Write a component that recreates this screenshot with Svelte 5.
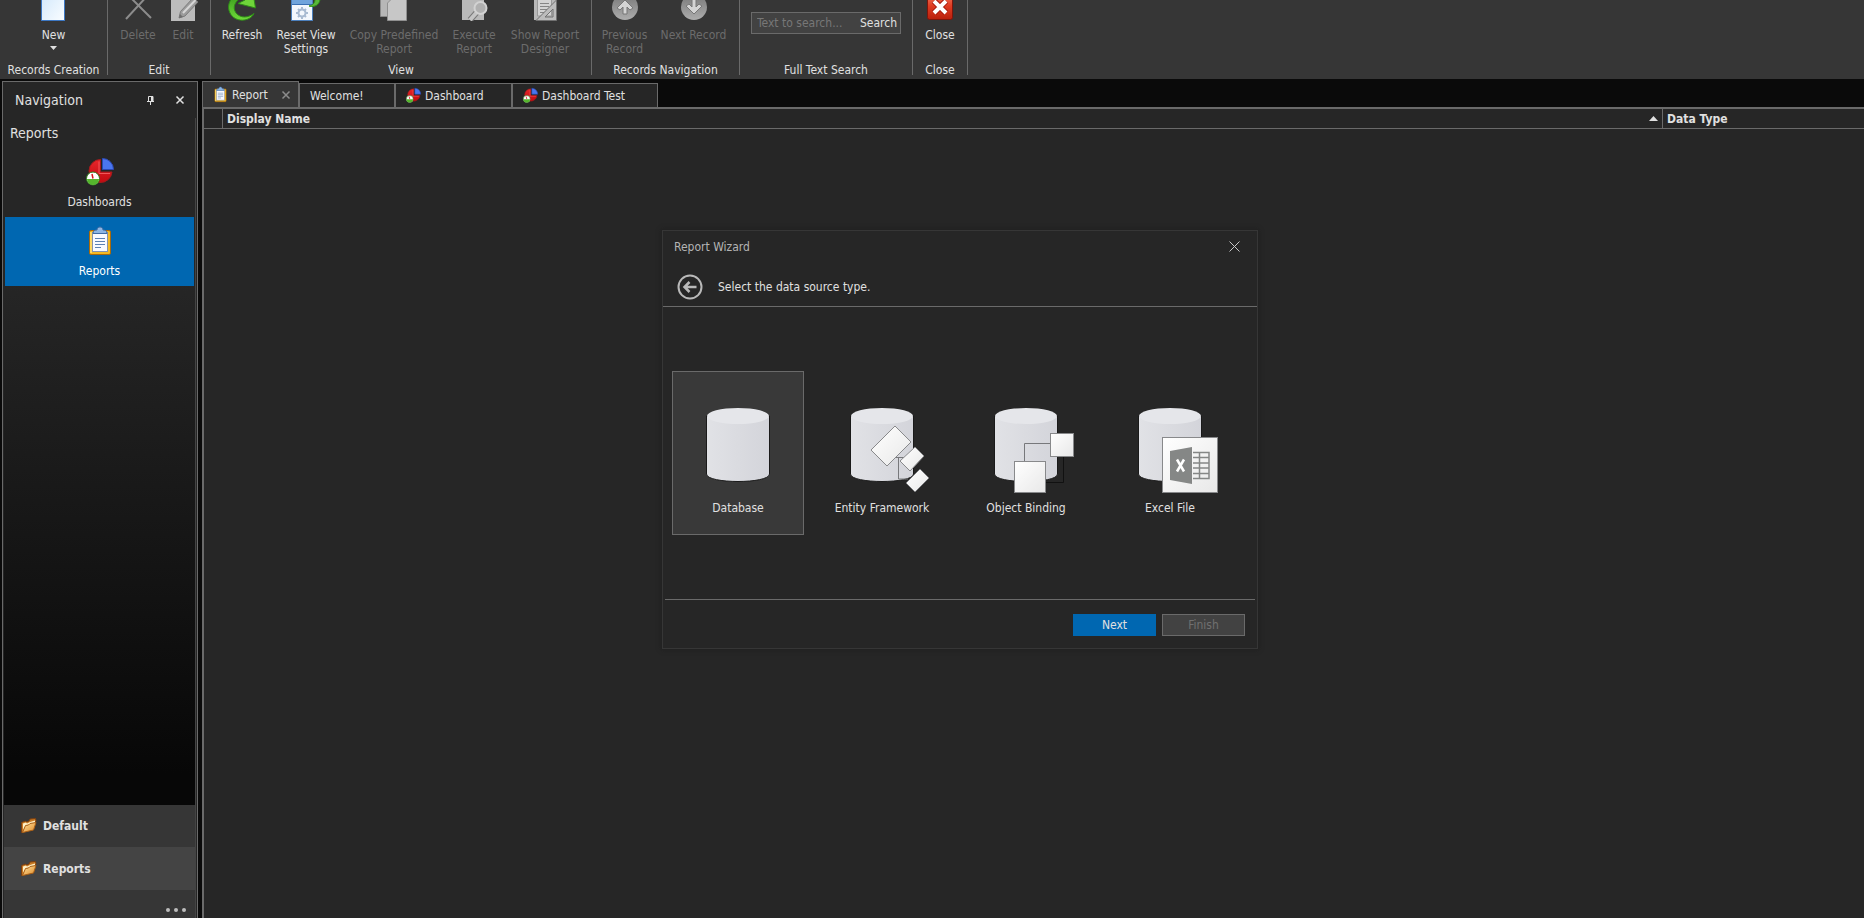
<script>
  let query = $state("");
  let activeTab = $state("Report");
  let activeItem = $state("Reports");
  let source = $state("Database");

  const ribbon = [
    { title: "Records Creation", width: 108, buttons: [{ label: "New", icon: "new", width: 60, menu: true }] },
    {
      title: "Edit",
      width: 103,
      buttons: [
        { label: "Delete", icon: "delete", width: 48, disabled: true },
        { label: "Edit", icon: "edit", width: 42, disabled: true },
      ],
    },
    {
      title: "View",
      width: 381,
      buttons: [
        { label: "Refresh", icon: "refresh", width: 52 },
        { label: "Reset View Settings", icon: "reset", width: 76 },
        { label: "Copy Predefined Report", icon: "copy", width: 100, disabled: true },
        { label: "Execute Report", icon: "execute", width: 60, disabled: true },
        { label: "Show Report Designer", icon: "designer", width: 82, disabled: true },
      ],
    },
    {
      title: "Records Navigation",
      width: 148,
      buttons: [
        { label: "Previous Record", icon: "up", width: 56, disabled: true },
        { label: "Next Record", icon: "down", width: 82, disabled: true },
      ],
    },
    { title: "Full Text Search", width: 173, search: true },
    { title: "Close", width: 55, buttons: [{ label: "Close", icon: "close", width: 50 }] },
  ];

  const tabs = [
    { label: "Report", icon: "clipboard", width: 97 },
    { label: "Welcome!", width: 96 },
    { label: "Dashboard", icon: "pie", width: 117 },
    { label: "Dashboard Test", icon: "pie", width: 146 },
  ];

  const items = [
    { label: "Dashboards", icon: "pie" },
    { label: "Reports", icon: "clipboard" },
  ];

  const sources = ["Database", "Entity Framework", "Object Binding", "Excel File"];
</script>

{#snippet pie(size)}
  <svg width={size} height={size} viewBox="0 0 28 28" aria-hidden="true">
    <path d="M14.500 1.500A11.500 11.500 0 1 0 26 14H14.500Z" fill="url(#slice)" stroke="#a51a1c" />
    <path d="M13 3.500V15.500H24" fill="none" stroke="#f2575a" />
    <path d="M16.500.5A11 11 0 0 1 27.500 11.500H16.500Z" fill="#4a76ee" stroke="#2c48b4" />
    <circle cx="7" cy="20.500" r="6.500" fill="#fff" stroke="#2f7d1c" />
    <path d="M1 21A6 6 0 0 0 13 21Z" fill="#55b52d" />
    <path d="M6 16l1 4.500" stroke="#d8131b" stroke-width="1.500" />
  </svg>
{/snippet}

{#snippet clipboard(size)}
  <svg width={size} height={size} viewBox="0 0 28 28" aria-hidden="true">
    <rect x="3.500" y="3.500" width="21" height="24" rx="1.500" fill="#f4b922" stroke="#a9690a" />
    <path d="M5 5v21" stroke="#ffe27a" stroke-width="1.500" />
    <rect x="6.500" y="5.500" width="15" height="19" fill="#f8faff" stroke="#8792ab" />
    <path d="M9 11.500h10M9 14.500h10M9 17.500h10M9 20.500h6" stroke="#5c81b3" />
    <path d="M7 6.500c0-3 2-3.500 4-3.500 0-4 6-4 6 0 2 0 4 .5 4 3.500Z" fill="#8db5e3" stroke="#3e6ca5" />
  </svg>
{/snippet}

{#snippet folder()}
  <svg width="16" height="16" viewBox="0 0 16 16" aria-hidden="true">
    <path d="M.5 14.500V4.500l4-1.500 1 1 2.500-1 1-2 5.500-.5.5 2-2.500 9Z" fill="#c97a24" stroke="#7b3f10" />
    <path d="M2 12V5.500l3-1 1 1 3-1.500 5-1.500v2L5 7.500Z" fill="#fff0c5" />
    <path d="M1.500 14.500L4.500 7.500l3-.5 1.500-1.500 6-1-2.500 7.500Z" fill="url(#manila)" stroke="#a96018" />
  </svg>
{/snippet}

<!-- Ribbon glyphs sit on a 32x32 grid whose top 11 rows are scrolled out of view -->
{#snippet ribbonIcon(name)}
  <svg class="ribbon-icon" width="32" height="21" viewBox="0 11 32 21" aria-hidden="true">
    {#if name === "new"}
      <rect x="3.500" y="1.500" width="23" height="30" fill="url(#paper)" stroke="#3d78c4" />
    {:else if name === "delete"}
      <path d="M4 30L27 5M5 5l24 24" stroke="#8c8c8c" stroke-width="2" fill="none" />
    {:else if name === "edit"}
      <rect x="4" y="4" width="24" height="28" fill="#bcbcbc" />
      <path d="M12 29l1.500-6.500L26 9l5 4-13 14Z" fill="#9c9c9c" stroke="#7c7c7c" />
      <path d="M16 24L28.500 11" stroke="#d6d6d6" stroke-width="2" />
      <path d="M12 29l1-4 3 3Z" fill="#6e6e6e" />
    {:else if name === "refresh"}
      <path d="M28 24.500C24 33 9 34 4 24 1 18 3 12 7 8l6 2c-6 5-6 11-2 15 4 4 11 4 17-.5Z" fill="url(#leaf)" stroke="#2f8c18" />
      <path d="M12 14.500L19 11l-3-5h9l3 4 1.500 9Z" fill="#6fd43a" stroke="#2f8c18" />
    {:else if name === "reset"}
      <rect x="1.500" y="5.500" width="21" height="26" fill="#f3f7fd" stroke="#4c80bd" />
      <rect x="2" y="11" width="20" height="4" fill="#70a4dc" />
      <path d="M2 15.500h20" stroke="#3a70b3" />
      <circle cx="12" cy="24" r="3.500" fill="none" stroke="#a9bbd2" stroke-width="2" />
      <path d="M12 18v3M12 27v3M6 24h3M15 24h3M8 20l2 2M14 26l2 2M16 20l-2 2M10 26l-2 2" stroke="#a9bbd2" stroke-width="2" />
      <path d="M19 17c6 2 11-2 11-7h-5c0 4-2 6-6 7Z" fill="#5ab73a" stroke="#2f8c18" />
    {:else if name === "copy"}
      <path d="M2.500 4h16v23.500h-16Z" fill="#b7b7b7" stroke="#898989" />
      <path d="M9.500 14l4-4h15v21.500h-19Z" fill="#c7c7c7" stroke="#909090" />
    {:else if name === "execute"}
      <path d="M4 5h22v26H4Z" fill="#b9b9b9" />
      <path d="M19 23l-7 8" stroke="#777" stroke-width="6" />
      <path d="M19 23l-7 8" stroke="#c5c5c5" stroke-width="4" />
      <circle cx="22.500" cy="19" r="6" fill="#b0b0b0" stroke="#d2d2d2" stroke-width="2" />
    {:else if name === "designer"}
      <path d="M5 4h22v27H5Z" fill="#b8b8b8" />
      <path d="M8.500 11v16h14V11" fill="#d3d3d3" stroke="#999" />
      <path d="M11 14.500h9M11 17.500h9M11 20.500h7M11 23.500h4" stroke="#858585" />
      <path d="M7 31.500L27.500 11v20.500ZM16 28h8v-8Z" fill="#bcbcbc" stroke="#717171" fill-rule="evenodd" />
    {:else if name === "up" || name === "down"}
      <circle cx="16" cy="18" r="13" fill="url(#steel)" />
      <path
        d={name === "up" ? "M16 11l8 8-3 2-3-3v7h-4v-7l-3 3-3-2Z" : "M16 25l8-8-3-2-3 3v-8h-4v8l-3-3-3 2Z"}
        fill="#d4d4d4"
        stroke="#777"
      />
    {:else if name === "close"}
      <rect x="3.500" y="3.500" width="25" height="27" rx="2" fill="url(#alert)" stroke="#7e150b" />
      <path d="M10 12l12 12M22 12L10 24" stroke="#a3170b" stroke-width="6" />
      <path d="M10 12l12 12M22 12L10 24" stroke="#fff" stroke-width="4" />
    {/if}
  </svg>
{/snippet}

{#snippet sourceIcon(name)}
  <svg width="104" height="80" viewBox="0 0 104 80" aria-hidden="true">
    <path d="M20.500 10v58c0 10 63 10 63 0V10Z" fill="url(#drum)" stroke="#1a1a1a" />
    <ellipse cx="52" cy="10" rx="31" ry="8" fill="#e5e6ea" />
    {#if name === "Entity Framework"}
      <path d="M66 51.500h10M68.500 51v22H78" fill="none" stroke="#77787b" />
      <path d="M65 20l16 16-24 24-16-16Z" fill="url(#sheet)" stroke="#88898b" />
      <path d="M85 41l9 9-14 15-10-10Z" fill="url(#sheet)" stroke="#88898b" />
      <path d="M90 63l9 9-14 14-9-9Z" fill="url(#sheet)" stroke="#77787b" />
    {:else if name === "Object Binding"}
      <path d="M50.500 56V37.500H77" fill="none" stroke="#77787b" />
      <path d="M72 76.500h17.500V50" fill="none" stroke="#111" />
      <rect x="76.500" y="27.500" width="23" height="23" fill="url(#sheet)" stroke="#88898b" />
      <rect x="40.500" y="55.500" width="31" height="31" fill="url(#sheet)" stroke="#88898b" />
    {:else if name === "Excel File"}
      <rect x="44.500" y="31.500" width="55" height="55" fill="url(#sheet)" stroke="#88898b" />
      <path d="M52 45l22-4v37l-22-4Z" fill="#858786" />
      <path d="M75 46.500h16v26H75M75 51.500h16M75 57h16M75 62h16M75 67.500h16M81.500 46v27" fill="none" stroke="#858786" stroke-width="1.500" />
      <path d="M59 53.500l7 12M66 53.500l-7 12" stroke="#fff" stroke-width="2.500" />
    {/if}
  </svg>
{/snippet}

<svg class="defs" width="0" height="0" aria-hidden="true">
  <defs>
    <linearGradient id="paper" x2="1" y2="1">
      <stop offset="0" stop-color="#cfe6fb" />
      <stop offset="1" stop-color="#fafdff" />
    </linearGradient>
    <linearGradient id="leaf" x2="0" y2="1">
      <stop offset="0" stop-color="#3fa01f" />
      <stop offset="1" stop-color="#6fd93a" />
    </linearGradient>
    <linearGradient id="slice" x2="0" y2="1">
      <stop offset="0" stop-color="#e8262b" />
      <stop offset="1" stop-color="#c20a10" />
    </linearGradient>
    <linearGradient id="manila" x2="1" y2="1">
      <stop offset="0" stop-color="#ffe2a0" />
      <stop offset="1" stop-color="#e08a26" />
    </linearGradient>
    <linearGradient id="steel" x2="0" y2="1">
      <stop offset="0" stop-color="#777" />
      <stop offset="1" stop-color="#adadad" />
    </linearGradient>
    <linearGradient id="alert" x2="0" y2="1">
      <stop offset="0" stop-color="#f07f66" />
      <stop offset="0.500" stop-color="#df3c22" />
      <stop offset="1" stop-color="#b8200d" />
    </linearGradient>
    <linearGradient id="drum">
      <stop offset="0" stop-color="#e1e2e6" />
      <stop offset="1" stop-color="#d3d4da" />
    </linearGradient>
    <linearGradient id="sheet" x2="1" y2="1">
      <stop offset="0" stop-color="#fff" />
      <stop offset="1" stop-color="#e8e8e8" />
    </linearGradient>
  </defs>
</svg>

<div class="app">
  <header class="ribbon">
    {#each ribbon as group}
      <section class="group" style:width="{group.width}px">
        <div class="group-body">
          {#if group.search}
            <form class="search" onsubmit={(e) => e.preventDefault()}>
              <input type="text" aria-label="Text to search" placeholder="Text to search..." bind:value={query} />
              <button type="submit">Search</button>
            </form>
          {:else}
            {#each group.buttons as button}
              <button class="ribbon-button" style:width="{button.width}px" disabled={button.disabled}>
                {@render ribbonIcon(button.icon)}
                <span>{button.label}</span>
                {#if button.menu}
                  <svg width="7" height="4" viewBox="0 0 7 4" aria-hidden="true"><path d="M0 0h7L3.500 4Z" fill="#e0e0e0" /></svg>
                {/if}
              </button>
            {/each}
          {/if}
        </div>
        <div class="group-title">{group.title}</div>
      </section>
    {/each}
  </header>

  <div class="workspace">
    <aside class="navigation">
      <div class="nav-header">
        <h2>Navigation</h2>
        <button aria-label="Auto hide">
          <svg width="8" height="10" viewBox="0 0 8 10"><path d="M1.500 6V1.500H6V6M0 6.500h7M3.500 7v3" fill="none" stroke="#e0e0e0" /><path d="M4 1h2v5H4Z" fill="#e0e0e0" /></svg>
        </button>
        <button aria-label="Close navigation">
          <svg width="8" height="8" viewBox="0 0 8 8"><path d="M.5.5l7 7M7.500.5l-7 7" stroke="#e0e0e0" stroke-width="1.500" /></svg>
        </button>
      </div>
      <nav class="nav-body">
        <h3>Reports</h3>
        {#each items as item}
          <button class="nav-item" class:selected={activeItem === item.label} onclick={() => (activeItem = item.label)}>
            {#if item.icon === "pie"}{@render pie(28)}{:else}{@render clipboard(28)}{/if}
            <span>{item.label}</span>
          </button>
        {/each}
        <div class="nav-groups">
          <button class="nav-group">{@render folder()}Default</button>
          <button class="nav-group current">{@render folder()}Reports</button>
          <button class="nav-more" aria-label="More">
            <svg width="20" height="4" viewBox="0 0 20 4"><g fill="#bdbdbd"><circle cx="2" cy="2" r="2" /><circle cx="10" cy="2" r="2" /><circle cx="18" cy="2" r="2" /></g></svg>
          </button>
        </div>
      </nav>
    </aside>

    <main>
      <div class="tabs" role="tablist">
        {#each tabs as tab}
          <div class="tab" class:active={activeTab === tab.label} style:width="{tab.width}px">
            <button role="tab" aria-selected={activeTab === tab.label} onclick={() => (activeTab = tab.label)}>
              {#if tab.icon === "pie"}{@render pie(15)}{:else if tab.icon}{@render clipboard(15)}{/if}
              {tab.label}
            </button>
            {#if activeTab === tab.label}
              <button class="tab-close" aria-label="Close tab">
                <svg width="8" height="8" viewBox="0 0 8 8"><path d="M.5.5l7 7M7.500.5l-7 7" stroke="#8c8c8c" stroke-width="1.500" /></svg>
              </button>
            {/if}
          </div>
        {/each}
      </div>
      <div class="view">
        <table>
          <thead>
            <tr>
              <th class="indicator" aria-label="Row"></th>
              <th aria-sort="ascending">
                <div class="column">
                  Display Name
                  <svg width="9" height="5" viewBox="0 0 9 5" aria-hidden="true"><path d="M0 5L4.500 0 9 5Z" fill="#e0e0e0" /></svg>
                </div>
              </th>
              <th class="data-type">Data Type</th>
            </tr>
          </thead>
        </table>
      </div>
    </main>
  </div>

  <div class="wizard" role="dialog" aria-labelledby="wizard-title">
    <div class="wizard-title">
      <h1 id="wizard-title">Report Wizard</h1>
      <button aria-label="Close wizard">
        <svg width="11" height="11" viewBox="0 0 11 11"><path d="M.5.5l10 10M10.500.5l-10 10" stroke="#c8c8c8" /></svg>
      </button>
    </div>
    <div class="wizard-head">
      <button aria-label="Back">
        <svg width="26" height="26" viewBox="0 0 26 26">
          <circle cx="13" cy="13" r="11.500" fill="none" stroke="#b9b9b9" stroke-width="2" />
          <path d="M19.500 13H8M12.500 8L7.500 13l5 5" fill="none" stroke="#b9b9b9" stroke-width="2.500" />
        </svg>
      </button>
      <p>Select the data source type.</p>
    </div>
    <div class="sources">
      {#each sources as name}
        <button class="source" class:chosen={source === name} onclick={() => (source = name)}>
          {@render sourceIcon(name)}
          <span>{name}</span>
        </button>
      {/each}
    </div>
    <div class="wizard-actions">
      <button class="primary">Next</button>
      <button disabled>Finish</button>
    </div>
  </div>
</div>

<style>
  :global(body) {
    background: #0a0a0a;
  }

  .app {
    position: relative;
    display: flex;
    flex-direction: column;
    height: 100vh;
    overflow: hidden;
    color: #e0e0e0;
    font-family: "DejaVu Sans Condensed", "Noto Sans", sans-serif;
    font-size: 12px;
    line-height: 14px;
  }

  .defs {
    position: absolute;
  }

  button,
  input {
    margin: 0;
    padding: 0;
    border: 0;
    background: none;
    color: inherit;
    font: inherit;
  }

  h1,
  h2,
  h3,
  p {
    margin: 0;
    font-size: 12px;
    font-weight: normal;
  }

  svg {
    display: block;
    flex: none;
    overflow: visible;
  }

  .ribbon {
    display: flex;
    flex: none;
    height: 79px;
    background: #363636;
  }

  .group {
    display: flex;
    flex: none;
    flex-direction: column;
    box-sizing: border-box;
    height: 75px;
    border-right: 1px solid #6a6a6a;
  }

  .group-body {
    display: flex;
    flex: 1;
    align-items: flex-start;
    justify-content: center;
  }

  .group-title {
    line-height: 10px;
    text-align: center;
    white-space: nowrap;
  }

  .ribbon-button {
    display: flex;
    flex: none;
    flex-direction: column;
    align-items: center;
    gap: 4px;
  }

  .ribbon-button span {
    padding-top: 3px;
  }

  .ribbon-button:disabled {
    color: #6c6c6c;
  }

  .ribbon-icon {
    overflow: hidden;
  }

  .search {
    display: flex;
    box-sizing: border-box;
    width: 150px;
    height: 22px;
    margin-top: 12px;
    padding: 0 3px 0 5px;
    border: 1px solid #6a6a6a;
    background: #424242;
  }

  .search input {
    flex: 1;
    min-width: 0;
    outline: 0;
  }

  .search input::placeholder {
    color: #777;
    opacity: 1;
  }

  .workspace {
    display: flex;
    flex: 1;
    min-height: 0;
    gap: 4px;
    padding: 2px 0 0 2px;
  }

  .navigation {
    display: flex;
    flex: none;
    flex-direction: column;
    box-sizing: border-box;
    width: 196px;
    border: solid #6a6a6a;
    border-width: 1px 1px 0;
    background: #262626;
  }

  .nav-header {
    display: flex;
    align-items: center;
    gap: 21px;
    height: 36px;
    padding: 0 13px 0 12px;
  }

  h2,
  h3 {
    flex: 1;
    font-size: 14px;
    line-height: 18px;
  }

  .nav-body {
    display: flex;
    flex: 1;
    flex-direction: column;
    margin: 0 1px;
    border-right: 1px solid #444;
    background: linear-gradient(#262626 20%, #070707 82%);
  }

  h3 {
    flex: none;
    padding: 6px;
  }

  .nav-item {
    display: flex;
    flex-direction: column;
    align-items: center;
    gap: 9px;
    height: 69px;
    margin: 0 1px;
    padding-top: 10px;
  }

  .nav-item.selected {
    background: #0067b1;
    color: #fff;
  }

  .nav-groups {
    display: flex;
    flex-direction: column;
    margin-top: auto;
  }

  .nav-group {
    display: flex;
    align-items: center;
    gap: 6px;
    height: 42px;
    padding-left: 17px;
    background: #363636;
    font-weight: bold;
  }

  .nav-group.current {
    height: 43px;
    background: #444;
  }

  .nav-more {
    display: flex;
    align-items: center;
    justify-content: flex-end;
    height: 28px;
    padding: 12px 9px 0 0;
    background: #363636;
  }

  main {
    display: flex;
    flex: 1;
    flex-direction: column;
    min-width: 0;
  }

  .tabs {
    display: flex;
    align-items: flex-end;
    height: 26px;
  }

  .tab {
    display: flex;
    align-items: center;
    justify-content: space-between;
    box-sizing: border-box;
    height: 24px;
    padding: 0 8px 0 10px;
    border: solid #6a6a6a;
    border-width: 1px 1px 0;
    background: #262626;
  }

  .tab.active {
    height: 26px;
    background: #363636;
  }

  .tab button {
    display: flex;
    align-items: center;
    gap: 4px;
    white-space: nowrap;
  }

  .view {
    flex: 1;
    border: solid #6a6a6a;
    border-width: 2px 0 0 2px;
    background: #262626;
  }

  table {
    width: 100%;
    border-collapse: collapse;
    table-layout: fixed;
  }

  th {
    height: 19px;
    padding: 0 4px;
    border-right: 1px solid #6a6a6a;
    border-bottom: 1px solid #6a6a6a;
    text-align: left;
  }

  .indicator {
    width: 10px;
  }

  .data-type {
    width: 193px;
    border-right: 0;
  }

  .column {
    display: flex;
    align-items: center;
    justify-content: space-between;
  }

  .wizard {
    position: absolute;
    top: 230px;
    left: 662px;
    display: flex;
    flex-direction: column;
    box-sizing: border-box;
    width: 596px;
    border: 1px solid #363636;
    background: #262626;
    box-shadow: 0 0 4px 1px #202020;
  }

  .wizard-title {
    display: flex;
    align-items: center;
    justify-content: space-between;
    height: 31px;
    padding: 0 17px 0 11px;
    color: #b4b4b4;
  }

  .wizard-head {
    display: flex;
    align-items: center;
    gap: 15px;
    height: 39px;
    padding: 5px 0 0 14px;
    border-bottom: 1px solid #6a6a6a;
  }

  .sources {
    display: grid;
    grid-template-columns: repeat(4, 132px);
    gap: 12px;
    padding: 64px 9px;
  }

  .source {
    display: flex;
    flex-direction: column;
    align-items: center;
    gap: 15px;
    box-sizing: border-box;
    height: 164px;
    padding-top: 34px;
    border: 1px solid transparent;
    white-space: nowrap;
  }

  .source.chosen {
    border-color: #6a6a6a;
    background: #393939;
  }

  .wizard-actions {
    display: flex;
    justify-content: flex-end;
    gap: 6px;
    margin: 0 2px;
    padding: 14px 10px 12px;
    border-top: 1px solid #6a6a6a;
  }

  .wizard-actions button {
    box-sizing: border-box;
    width: 83px;
    height: 22px;
  }

  .wizard-actions .primary {
    background: #0067b1;
  }

  .wizard-actions button:disabled {
    border: 1px solid #6a6a6a;
    background: #424242;
    color: #707070;
  }
</style>
